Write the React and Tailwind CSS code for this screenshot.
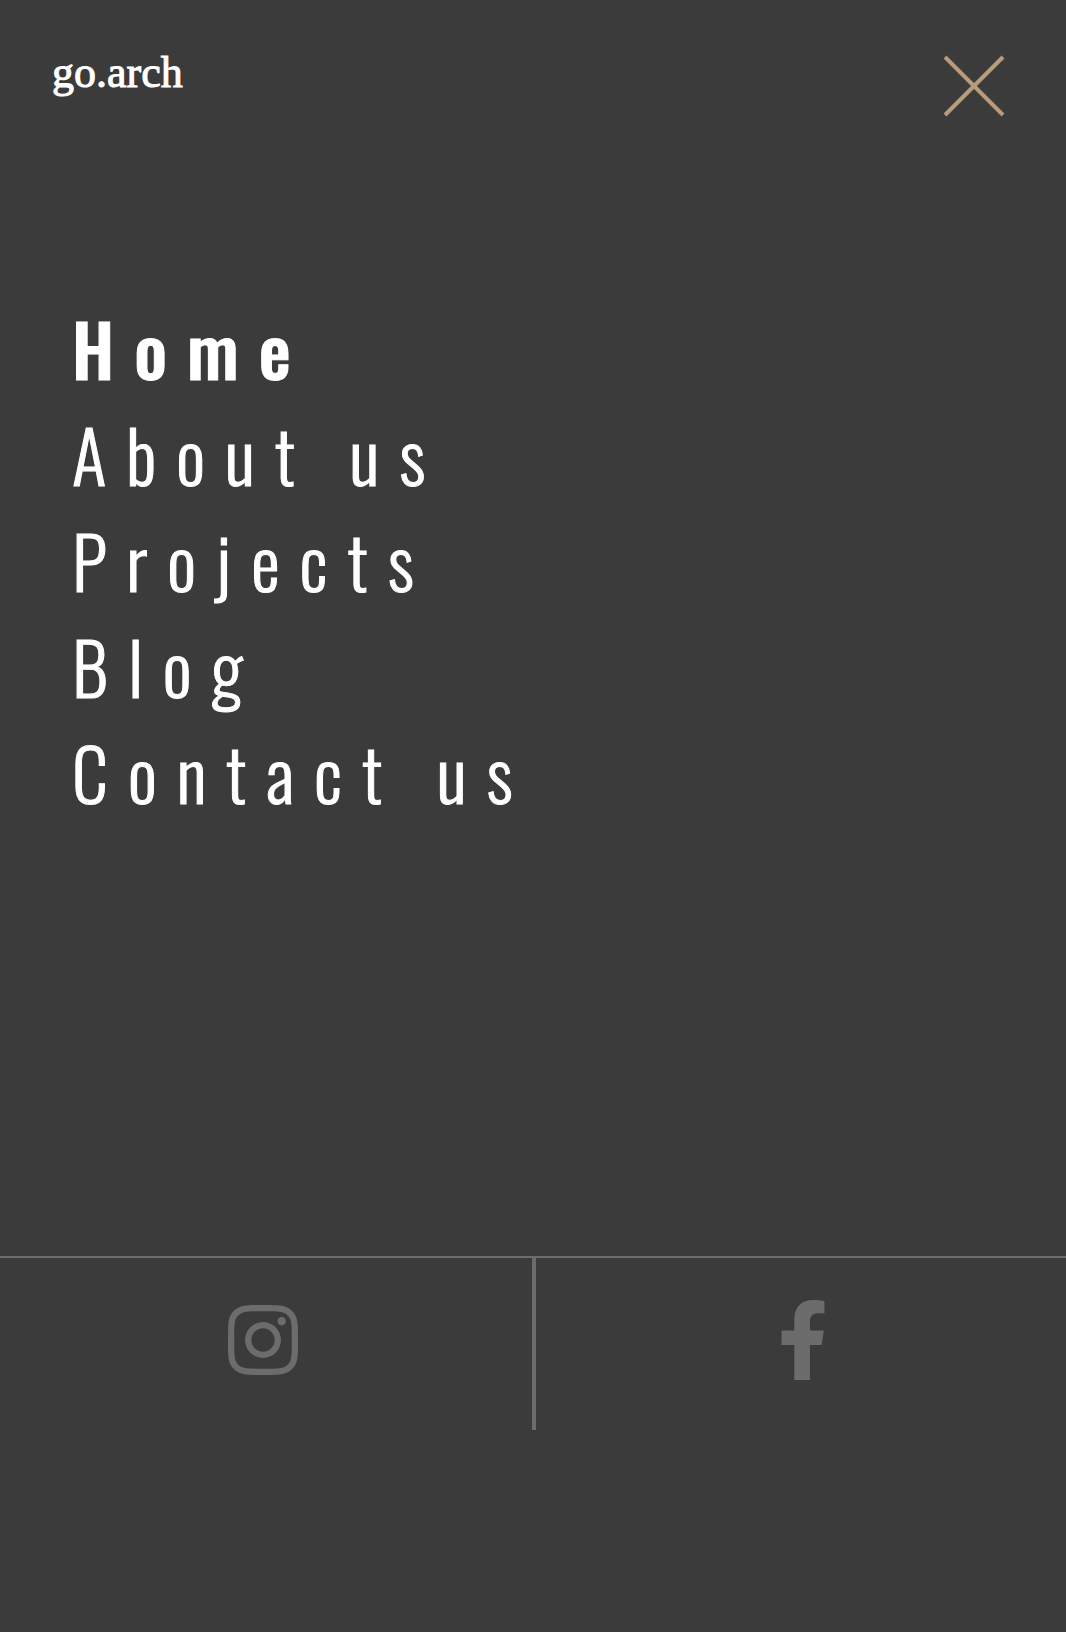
import { FaFacebookF, FaInstagram } from "react-icons/fa";

const links = [
  { label: "Home", href: "#home", current: true },
  { label: "About us", href: "#about" },
  { label: "Projects", href: "#projects" },
  { label: "Blog", href: "#blog" },
  { label: "Contact us", href: "#contact" },
];

export default function App() {
  return (
    <div className="flex min-h-screen flex-col bg-[#3b3b3b] text-white">
      <header className="flex items-start justify-between pt-12 pr-[54px] pl-13">
        <a href="#home" className="font-['Liberation_Serif',serif] text-[44px] leading-[50px] [-webkit-text-stroke:1px]">
          go.arch
        </a>
        <button type="button" aria-label="Close menu" className="p-1 text-[#b99b7b]">
          <svg viewBox="0 0 68 68" className="size-17" stroke="currentColor" strokeWidth="4" aria-hidden="true">
            <path d="M5 5 63 63M63 5 5 63" />
          </svg>
        </button>
      </header>

      <nav aria-label="Main" className="mt-[171px] pl-[72px]">
        <ul className="font-['Oswald','Roboto_Condensed','Liberation_Sans_Narrow',sans-serif] text-7xl leading-[106px] font-light tracking-[20px] [-webkit-text-stroke:1px]">
          {links.map((link) => (
            <li key={link.label}>
              <a
                href={link.href}
                aria-current={link.current ? "page" : undefined}
                className={link.current ? "font-medium" : undefined}
              >
                {link.label}
              </a>
            </li>
          ))}
        </ul>
      </nav>

      <footer className="mt-auto mb-[202px] flex border-t-2 border-[#6c6c6c] text-[80px] text-[#6c6c6c]">
        <a
          href="#instagram"
          aria-label="Instagram"
          className="flex h-43 w-[calc(50%+3px)] items-start justify-center border-r-4 border-[#6c6c6c] pt-[42px] pr-1.5"
        >
          <FaInstagram />
        </a>
        <a href="#facebook" aria-label="Facebook" className="flex flex-1 items-start justify-center pt-[42px] pl-1">
          <FaFacebookF />
        </a>
      </footer>
    </div>
  );
}
